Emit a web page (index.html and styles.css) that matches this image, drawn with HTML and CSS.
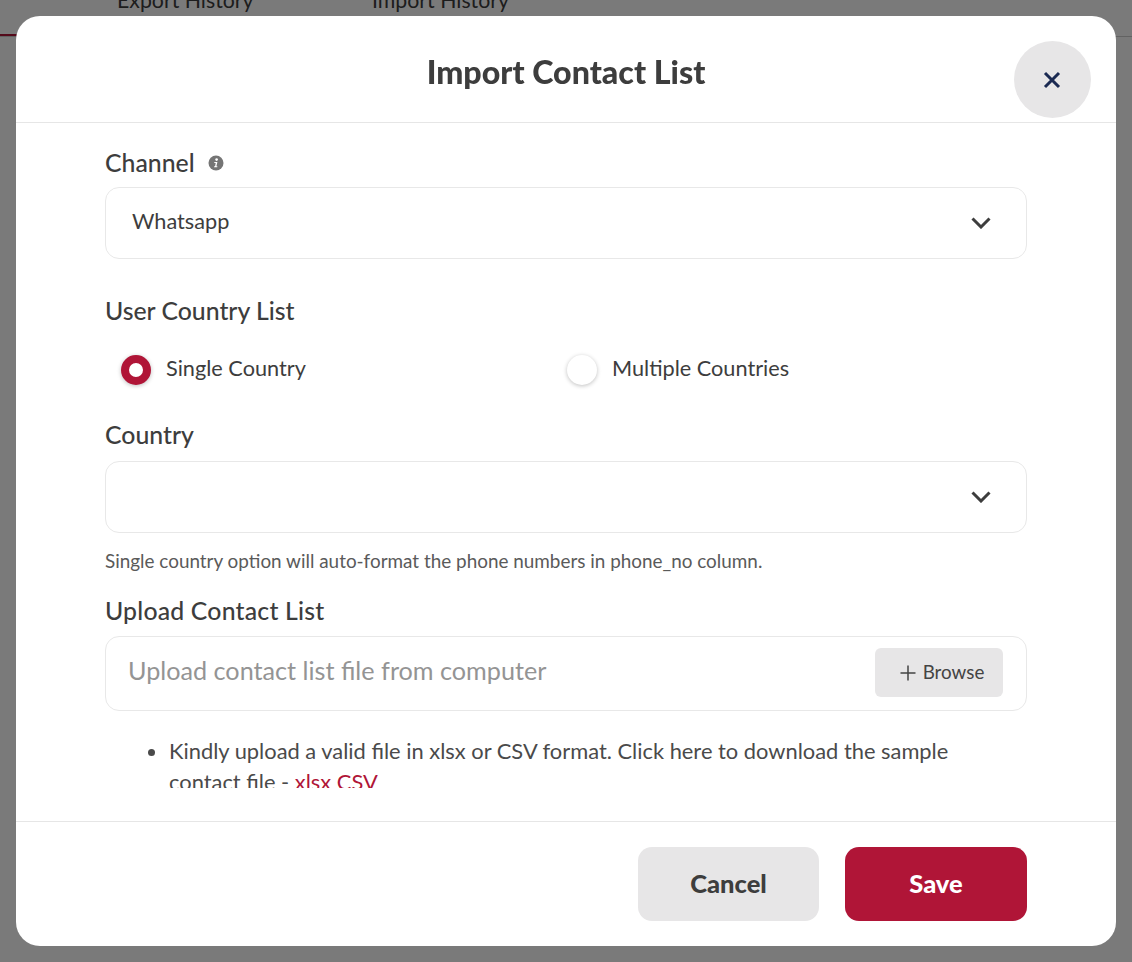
FILE: index.html
```html
<!DOCTYPE html>
<html lang="en">
<head>
<meta charset="utf-8">
<title>Import Contact List</title>
<link rel="stylesheet" href="styles.css">
</head>
<body>
<div class="page">
  <nav class="tabs">
    <span class="tab tab-export">Export History</span>
    <span class="tab tab-import">Import History</span>
  </nav>
</div>
<div class="backdrop">
  <div class="modal">
    <header class="modal-head">
      <h1 class="modal-title">Import Contact List</h1>
      <button class="close" type="button" aria-label="Close">
        <svg width="18" height="18" viewBox="0 0 18 18"><path d="M2 2L16 16M16 2L2 16" fill="none" stroke="#1b2a52" stroke-width="3"/></svg>
      </button>
    </header>
    <div class="modal-body">
      <div class="label-row channel-label">
        <span class="label">Channel</span>
        <svg class="info" width="16" height="16" viewBox="0 0 16 16"><circle cx="8" cy="8" r="7.5" fill="#757575"/><circle cx="8.6" cy="4.6" r="1.3" fill="#fff"/><path d="M6.4 7h3l-1 4.2h1l-.2 1H6l.2-1h.9l.6-3.2h-1.5z" fill="#fff"/></svg>
      </div>
      <div class="select">
        <span class="select-value">Whatsapp</span>
        <svg class="chevron" width="20" height="12" viewBox="0 0 20 12"><path d="M1.500 1.500L10 10L18.500 1.500" fill="none" stroke="#3d3d3d" stroke-width="3"/></svg>
      </div>
      <div class="label-row list-label"><span class="label">User Country List</span></div>
      <div class="radios">
        <label class="radio radio-single"><span class="dot dot-on"></span><span class="radio-text">Single Country</span></label>
        <label class="radio"><span class="dot"></span><span class="radio-text">Multiple Countries</span></label>
      </div>
      <div class="label-row country-label"><span class="label">Country</span></div>
      <div class="select">
        <span class="select-value"></span>
        <svg class="chevron" width="20" height="12" viewBox="0 0 20 12"><path d="M1.500 1.500L10 10L18.500 1.500" fill="none" stroke="#3d3d3d" stroke-width="3"/></svg>
      </div>
      <p class="hint">Single country option will auto-format the phone numbers in phone_no column.</p>
      <div class="label-row upload-label"><span class="label">Upload Contact List</span></div>
      <div class="upload">
        <span class="placeholder">Upload contact list file from computer</span>
        <button class="browse" type="button">
          <svg width="16" height="16" viewBox="0 0 16 16"><path d="M8 .5V15.500M.5 8H15.500" fill="none" stroke="#444" stroke-width="1.500"/></svg>
          <span>Browse</span>
        </button>
      </div>
      <ul class="notes">
        <li>Kindly upload a valid file in xlsx or CSV format. Click here to download the sample contact file - <a class="link" href="#">xlsx</a> <a class="link" href="#">CSV</a></li>
      </ul>
    </div>
    <footer class="modal-foot">
      <button class="btn btn-cancel" type="button">Cancel</button>
      <button class="btn btn-save" type="button">Save</button>
    </footer>
  </div>
</div>
</body>
</html>
```
FILE: styles.css
```css
* { box-sizing: border-box; }
html, body { margin: 0; height: 100%; overflow: hidden; }
body { font-family: Lato, "Noto Sans", sans-serif; color: #3d3d3d; background: #fff; }
button { font-family: inherit; border: 0; cursor: pointer; }

.page { height: 962px; }
.tabs { height: 37px; border-bottom: 1px solid #ccc; display: flex; align-items: flex-start; overflow: hidden; padding-left: 117px; position: relative; }
.tabs::before { content: ""; position: absolute; left: 0; bottom: 0; width: 60px; height: 2px; background: #b01537; }
.tab { font-size: 21.3px; line-height: 26px; margin-top: -13px; flex: none; color: #3d3d3d; }
.tab-export { width: 255px; }

.backdrop { position: fixed; inset: 0; background: rgba(0,0,0,.52); padding: 16px; }
.modal { background: #fff; height: 930px; border-radius: 24px; display: flex; flex-direction: column; overflow: hidden; }

.modal-head { height: 107px; flex: none; border-bottom: 1px solid #e6e6e6; position: relative; display: flex; justify-content: center; }
.modal-title { margin: 0; font-size: 32.2px; line-height: 40px; font-weight: 900; padding-top: 36px; color: #3d3d3d; }
.close { position: absolute; top: 25px; right: 25px; width: 77px; height: 77px; border-radius: 50%; background: #e7e6e7; display: flex; align-items: center; justify-content: center; padding: 0 1px 0 0; }

.modal-body { flex: 1; min-height: 0; overflow: hidden; padding: 0 89px; margin-bottom: 33px; }
.label-row { display: flex; align-items: center; gap: 13px; height: 32px; }
.label { font-size: 24.8px; line-height: 32px; font-weight: 500; color: #3d3d3d; }
.channel-label { margin-top: 24px; margin-bottom: 8px; }
.list-label { margin-top: 36px; }
.country-label { margin-top: 33px; margin-bottom: 10px; }
.upload-label { margin-top: 22px; margin-bottom: 9px; }
.upload-label .label { letter-spacing: .2px; }

.select { height: 72px; border: 1px solid #e8e8e8; border-radius: 14px; display: flex; align-items: center; justify-content: space-between; padding: 0 35px 0 26px; }
.select-value { font-size: 21.7px; padding-bottom: 4px; }

.radios { display: flex; margin-top: 25px; height: 34px; padding-left: 16px; }
.radio { display: flex; align-items: center; gap: 15px; }
.radio-single { width: 446px; }
.radio-text { font-size: 21.7px; padding-bottom: 3px; }
.dot { width: 30px; height: 30px; margin-top: 2px; border-radius: 50%; background: #fff; box-shadow: 0 1px 4px rgba(0,0,0,.25); }
.dot-on { border: 8px solid #b01537; }

.hint { margin: 16px 0 0; font-size: 18.9px; line-height: 24px; color: #5a5a5a; }

.upload { height: 75px; border: 1px solid #e8e8e8; border-radius: 14px; display: flex; align-items: center; justify-content: space-between; padding: 0 23px 0 22px; }
.placeholder { font-size: 25.2px; color: #949494; padding-bottom: 8px; }
.browse { width: 128px; height: 49px; border-radius: 6px; background: #e7e6e7; display: flex; align-items: center; justify-content: center; gap: 7px; font-size: 18.8px; color: #444; padding: 0 0 0 6px; margin-bottom: 2px; }
.browse span { padding-bottom: 2px; }

.notes { margin: 24px 0 0; padding: 0 70px 0 64px; font-size: 21.86px; line-height: 31px; color: #4a4a4a; }
.link { color: #b01537; text-decoration: none; }

.modal-foot { height: 125px; flex: none; border-top: 1px solid #e6e6e6; display: flex; justify-content: flex-end; align-items: flex-start; gap: 26px; padding: 25px 89px 0 0; }
.btn { height: 74px; border-radius: 14px; font-size: 25.5px; font-weight: 900; padding: 0 0 3px; }
.btn-cancel { width: 181px; background: #e7e6e7; color: #3d3d3d; }
.btn-save { width: 182px; background: #b01537; color: #fff; }
```
